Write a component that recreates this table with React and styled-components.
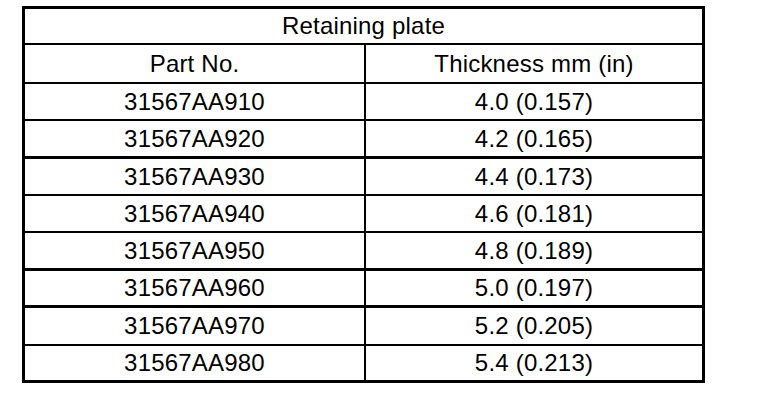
import React from "react";
import styled, { createGlobalStyle } from "styled-components";

const Global = createGlobalStyle`
  html, body { margin: 0; padding: 0; background: #fff; }
  body { font-family: "Liberation Sans", Arial, sans-serif; color: #000; }
`;

const Page = styled.div`
  padding: 6px 0 0 22px;
`;

const Table = styled.div`
  width: 683px;
  box-sizing: border-box;
  border: 3px solid #000;
  display: flex;
  flex-direction: column;
`;

const Row = styled.div`
  display: flex;
  height: ${(p) => p.$h}px;
  border-bottom: ${(p) => (p.$last ? 0 : p.$line)}px solid #000;
`;

const Cell = styled.div`
  display: flex;
  align-items: center;
  justify-content: center;
  font-size: 24px;
  line-height: 1;
  letter-spacing: 0.2px;
  white-space: nowrap;
  flex: ${(p) => (p.$grow ? "1 1 auto" : "0 0 auto")};
  width: ${(p) => (p.$w ? `${p.$w}px` : "auto")};
  box-sizing: border-box;
  border-right: ${(p) => (p.$divider ? "2px solid #000" : "none")};
`;

const rows = [
  ["31567AA910", "4.0 (0.157)", 35, 2],
  ["31567AA920", "4.2 (0.165)", 35, 3],
  ["31567AA930", "4.4 (0.173)", 35, 2],
  ["31567AA940", "4.6 (0.181)", 35, 2],
  ["31567AA950", "4.8 (0.189)", 35, 3],
  ["31567AA960", "5.0 (0.197)", 34, 3],
  ["31567AA970", "5.2 (0.205)", 36, 2],
  ["31567AA980", "5.4 (0.213)", 34, 0],
];

export default function App() {
  return (
    <>
      <Global />
      <Page>
        <Table>
          <Row $h={34} $line={2}>
            <Cell $grow>Retaining plate</Cell>
          </Row>
          <Row $h={37} $line={2}>
            <Cell $w={341} $divider>Part No.</Cell>
            <Cell $grow>Thickness mm (in)</Cell>
          </Row>
          {rows.map(([part, thick, h, line], i) => (
            <Row key={part} $h={h} $line={line} $last={i === rows.length - 1}>
              <Cell $w={341} $divider>{part}</Cell>
              <Cell $grow>{thick}</Cell>
            </Row>
          ))}
        </Table>
      </Page>
    </>
  );
}
